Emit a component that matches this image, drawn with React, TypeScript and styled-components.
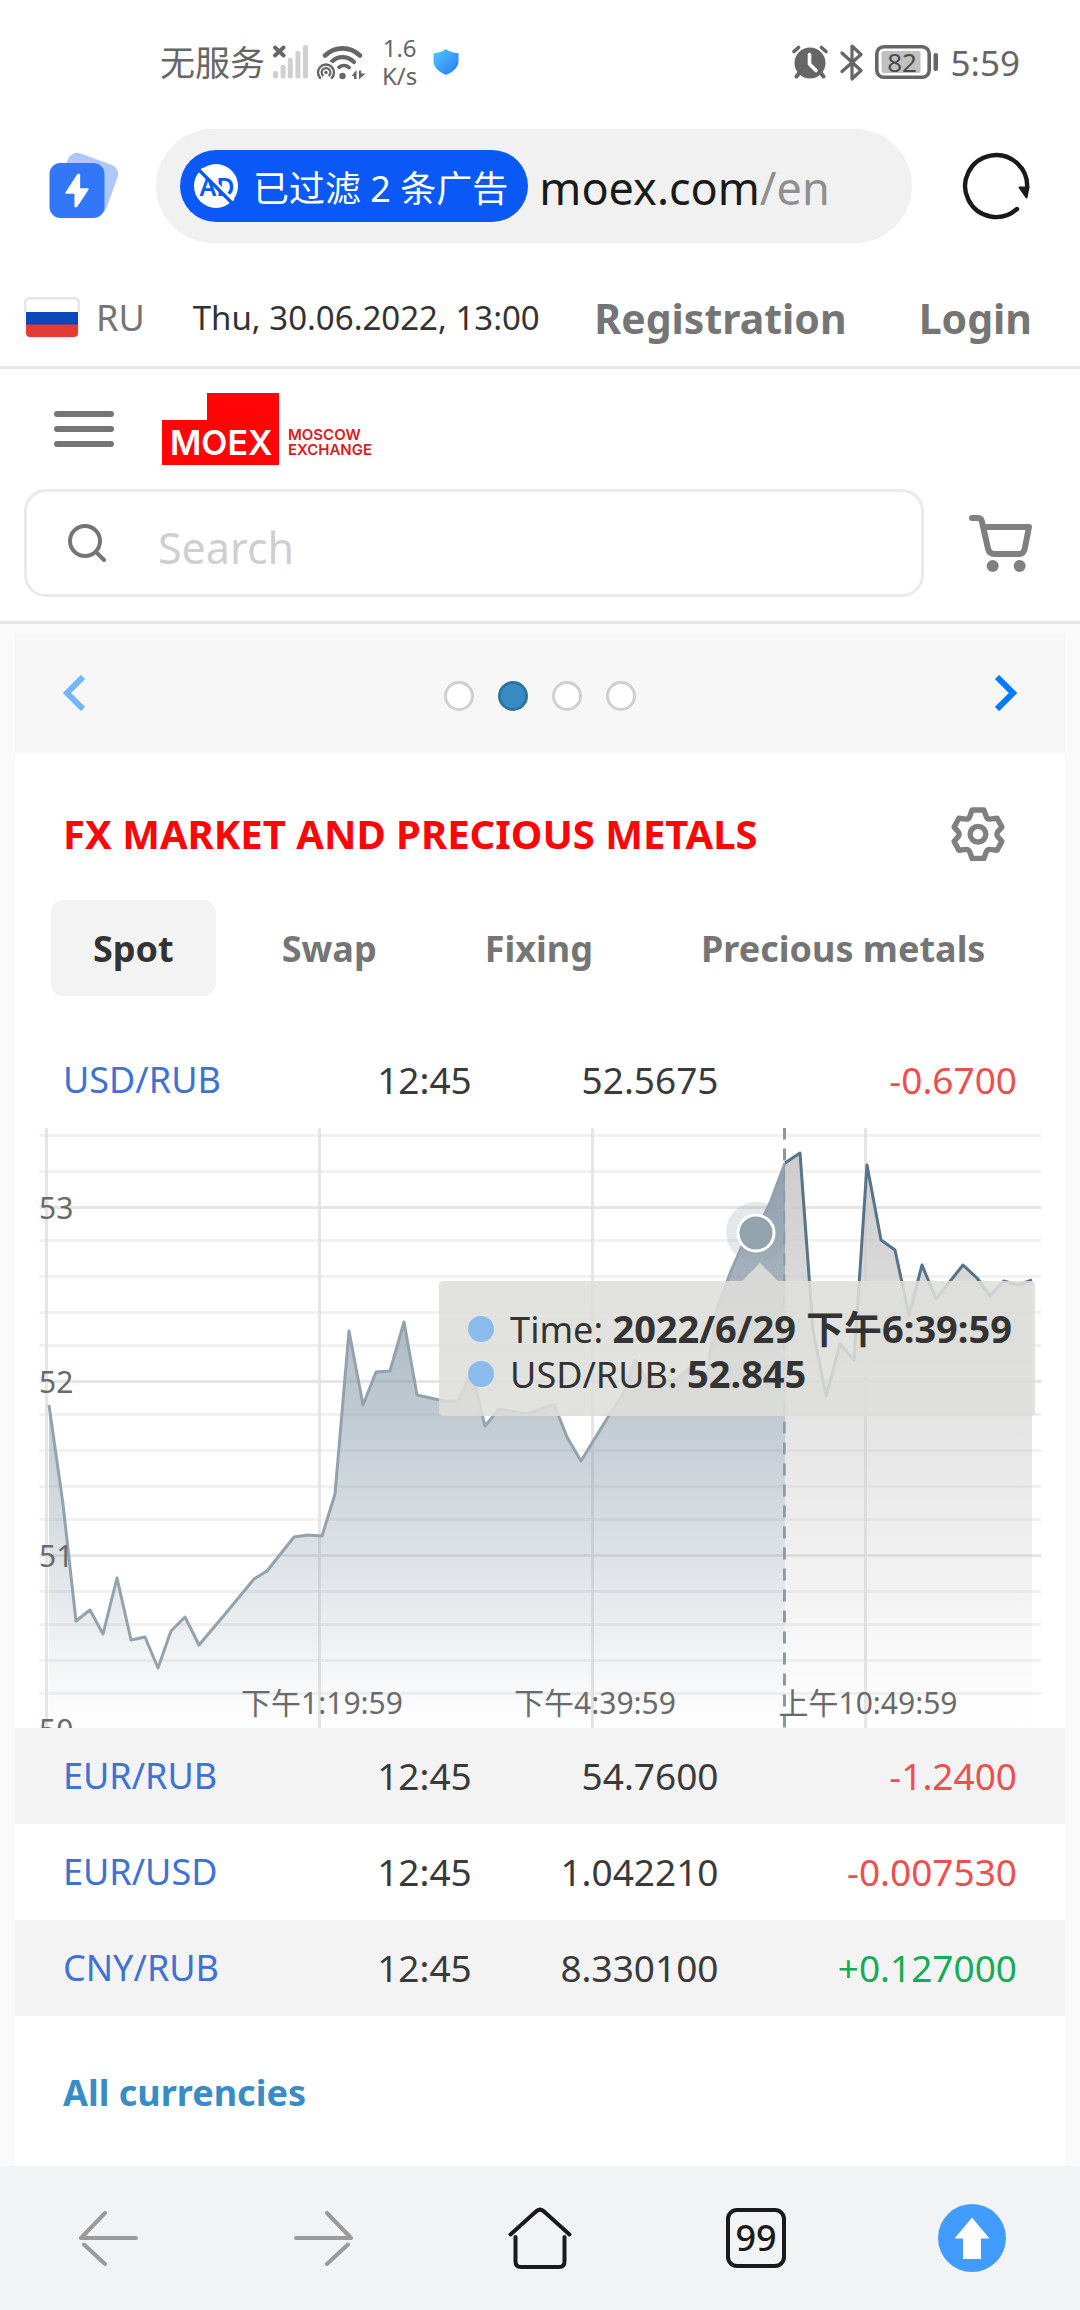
import React, { useState } from "react";
import styled, { createGlobalStyle } from "styled-components";

const sans = `"Noto Sans", "Noto Sans CJK SC", sans-serif`;

const GlobalStyle = createGlobalStyle`
  *, *::before, *::after { box-sizing: border-box; }
  body { margin: 0; background: #fff; color: #333; font-family: ${sans}; }
  button { margin: 0; padding: 0; border: 0; background: none; font: inherit; color: inherit; cursor: pointer; }
  a { color: inherit; text-decoration: none; }
  svg { display: block; flex: none; }
`;

/* ---------- phone status bar ---------- */

const StatusBar = styled.div`
  display: flex;
  justify-content: space-between;
  align-items: center;
  height: 124px;
  padding: 0 60px 0 160px;
  color: #666;
  font-size: 35px;
  line-height: 48px;
  white-space: nowrap;
`;

const StatusGroup = styled.div<{ $gap: number }>`
  display: flex;
  align-items: center;
  gap: ${(p) => p.$gap}px;
`;

const StatusText = styled.span`
  padding-top: 2px;
`;

const NetSpeed = styled.div`
  display: grid;
  justify-items: center;
  font-size: 24px;
  line-height: 28px;
`;

/* ---------- browser chrome ---------- */

const BrowserBar = styled.div`
  display: flex;
  align-items: center;
  gap: 36px;
  padding: 5px 50px 27px 48px;
`;

const AddressBar = styled.div`
  flex: 1;
  display: flex;
  align-items: center;
  gap: 11px;
  min-width: 0;
  height: 114px;
  padding: 0 24px;
  border-radius: 57px;
  background: #f1f1f1;
`;

const ReloadButton = styled.button`
  margin-left: 14px;
`;

const AdBadge = styled.button`
  display: flex;
  align-items: center;
  gap: 15px;
  height: 72px;
  padding: 0 20px 0 14px;
  border-radius: 36px;
  background: #0a59f7;
  color: #fff;
  font-size: 36px;
  white-space: nowrap;
`;

const Address = styled.div`
  color: #1a1a1a;
  font-size: 45px;
  line-height: 64px;
  padding-top: 4px;
  white-space: nowrap;
`;

const AddressPath = styled.span`
  color: #8f8f8f;
`;

const BottomNav = styled.nav`
  display: grid;
  grid-template-columns: repeat(5, 1fr);
  align-items: center;
  justify-items: center;
  height: 144px;
  background: #f1f3f5;
`;

const TabCount = styled.button`
  width: 60px;
  height: 60px;
  border: 4px solid #1a1a1a;
  border-radius: 11px;
  color: #1a1a1a;
  font-size: 36px;
  font-weight: 500;
  line-height: 50px;
`;

/* ---------- site header ---------- */

const TopBar = styled.div`
  display: flex;
  align-items: center;
  height: 99px;
  padding: 0 48px 0 24px;
  border-bottom: 3px solid #e8e8e8;
  white-space: nowrap;
`;

const Language = styled.button`
  display: flex;
  align-items: center;
  gap: 16px;
  color: #757575;
  font-size: 36px;
  line-height: 48px;
`;

const DateLabel = styled.time`
  margin-left: 48px;
  font-size: 33px;
  line-height: 48px;
`;

const Account = styled.nav`
  display: flex;
  gap: 72px;
  margin-left: auto;
  color: #757575;
  font-size: 41px;
  font-weight: 700;
  line-height: 56px;
`;

const Header = styled.header`
  padding: 24px;
  border-bottom: 3px solid #e5e5e5;
`;

const BrandRow = styled.div`
  display: flex;
  align-items: center;
  gap: 48px;
  padding-left: 30px;
`;

const SearchRow = styled.form`
  display: flex;
  align-items: center;
  gap: 45px;
  margin-top: 24px;
  padding-right: 24px;
`;

const SearchField = styled.label`
  flex: 1;
  display: flex;
  align-items: center;
  gap: 52px;
  height: 108px;
  padding: 0 41px;
  border: 3px solid #eaeaea;
  border-radius: 22px;
`;

const SearchInput = styled.input`
  flex: 1;
  min-width: 0;
  padding: 10px 0 0;
  border: 0;
  outline: 0;
  background: none;
  color: #333;
  font: 43px/60px ${sans};
  &::placeholder { color: #cfcfcf; opacity: 1; }
`;

/* ---------- market widget ---------- */

const Content = styled.main`
  padding: 9px 15px 0;
  background: #fafafa;
`;

const Slider = styled.div`
  display: flex;
  align-items: center;
  justify-content: space-between;
  height: 120px;
  padding: 0 48px;
  background: #f7f7f7;
`;

const Dots = styled.div`
  display: flex;
  gap: 24px;
  padding-top: 6px;
`;

const Dot = styled.button<{ $active: boolean }>`
  width: 30px;
  height: 30px;
  border: 3px solid ${(p) => (p.$active ? "#30739f" : "#d0d0d0")};
  border-radius: 50%;
  background: ${(p) => (p.$active ? "#388cc6" : "#fff")};
`;

const Panel = styled.section`
  background: #fff;
`;

const PanelHead = styled.div`
  display: flex;
  align-items: center;
  justify-content: space-between;
  padding: 54px 60px 39px 48px;
`;

const Title = styled.h2`
  margin: 0;
  color: #ff0508;
  font-size: 40px;
  font-weight: 700;
  line-height: 54px;
  white-space: nowrap;
`;

const Tabs = styled.div`
  display: flex;
  gap: 24px;
  padding: 0 36px 36px;
`;

const Tab = styled.button<{ $active: boolean }>`
  height: 96px;
  padding: 0 42px;
  border-radius: 12px;
  background: ${(p) => (p.$active ? "#f3f3f3" : "none")};
  color: ${(p) => (p.$active ? "#333" : "#757575")};
  font-size: 36px;
  font-weight: 700;
  white-space: nowrap;
`;

const Quotes = styled.table`
  width: 100%;
  border-collapse: collapse;
  table-layout: fixed;
  color: #3a3a3a;
  font-size: 37px;
  line-height: 48px;
`;

const Col = styled.col<{ $width: number }>`
  width: ${(p) => p.$width}%;
`;

const QuoteRow = styled.tr<{ $shaded: boolean }>`
  height: 96px;
  background: ${(p) => (p.$shaded ? "#f3f3f3" : "#fff")};
`;

const Pair = styled.th`
  padding: 0 0 0 48px;
  color: #3f72d2;
  font-size: 36px;
  font-weight: 400;
  text-align: left;
`;

const Value = styled.td`
  padding: 0;
  text-align: right;
`;

const Change = styled(Value)<{ $up: boolean }>`
  padding-right: 48px;
  color: ${(p) => (p.$up ? "#14ad57" : "#ef4e4e")};
`;

const ChartCell = styled.td`
  padding: 0;
`;

const ChartBox = styled.div`
  position: relative;
  color: #333;
`;

const ChartSvg = styled.svg`
  width: 100%;
  height: auto;
`;

const AxisText = styled.text`
  fill: #6a6a6a;
  font: 30px ${sans};
`;

const Tooltip = styled.div`
  position: absolute;
  top: 153px;
  right: 30px;
  display: grid;
  padding: 25px 23px 20px 29px;
  border-radius: 4px;
  background: rgba(222, 222, 218, 0.88);
  font-size: 36px;
  line-height: 45px;
  white-space: nowrap;
  &::before {
    content: "";
    position: absolute;
    right: 257px;
    bottom: 100%;
    border: 18px solid transparent;
    border-top: 0;
    border-bottom-color: rgba(222, 222, 218, 0.88);
  }
`;

const TooltipLine = styled.div`
  display: flex;
  align-items: center;
  gap: 16px;
  height: 45px;
  &::before {
    content: "";
    width: 26px;
    height: 26px;
    border-radius: 50%;
    background: #8abbed;
  }
`;

const TooltipValue = styled.b`
  font-size: 38px;
`;

const PanelFoot = styled.div`
  padding: 53px 48px 49px;
  color: #3a8cc4;
  font-size: 36px;
  font-weight: 700;
  line-height: 48px;
`;

/* ---------- icons ---------- */

const SignalIcon = () => (
  <svg width="36" height="34" viewBox="0 0 36 34">
    <g fill="#d0d0d0">
      <rect x="0" y="26" width="5" height="7.5" rx="2" />
      <rect x="7.6" y="19.7" width="5" height="13.8" rx="2" />
      <rect x="14.8" y="12.7" width="5" height="20.8" rx="2" />
      <rect x="22.4" y="6" width="5" height="27.5" rx="2" />
      <rect x="30" y="0" width="5" height="33.5" rx="2" />
    </g>
    <path d="M2 2.5l8.6 8M10.6 2.5l-8.6 8" stroke="#666" strokeWidth="3.8" strokeLinecap="round" />
  </svg>
);

const WifiIcon = () => (
  <svg width="49" height="35" viewBox="0 0 49 35" fill="none" stroke="#666">
    <path d="M8 10.5C18 1 33 1 43 10.5" strokeWidth="4.6" strokeLinecap="round" />
    <path d="M14.5 17C21 10.5 30 10.5 37 17" strokeWidth="4.2" strokeLinecap="round" />
    <path d="M22 22.2C25 20 29 20 32 22.5" strokeWidth="3.8" strokeLinecap="round" />
    <circle cx="9" cy="27" r="11" fill="#fff" stroke="none" />
    <path d="M3.8 33.6A8 8 0 1 1 14.2 33.6" strokeWidth="2.4" />
    <path d="M6.4 31A4.4 4.4 0 1 1 11.6 31" strokeWidth="2.2" />
    <circle cx="9" cy="27.5" r="1.7" fill="#666" stroke="none" />
    <circle cx="25.5" cy="31" r="3.2" fill="#666" stroke="none" />
    <path d="M34.5 31l5-6v9h-2.500v-3zM42 25.500h2.200v3H48.500l-6.500 6z" fill="#666" stroke="none" />
  </svg>
);

const ShieldIcon = () => (
  <svg width="26" height="26" viewBox="0 0 26 26">
    <defs>
      <linearGradient id="shield" x1="0" y1="0" x2="1" y2="1">
        <stop offset="0" stopColor="#55c8fd" />
        <stop offset="1" stopColor="#2378fb" />
      </linearGradient>
    </defs>
    <path d="M13 0C16.5 2.500 20.5 3.800 25.5 4.200V12C25.5 18.500 20 23 13 26C6 23 .5 18.500 .5 12V4.200C5.500 3.800 9.500 2.500 13 0Z" fill="url(#shield)" />
  </svg>
);

const AlarmIcon = () => (
  <svg width="36" height="34" viewBox="0 0 36 34">
    <g stroke="#666" strokeLinecap="round" fill="none">
      <path d="M2 6.5L6.5 2.5M29.5 2.5L34 6.5" strokeWidth="3.6" />
      <path d="M8 27l-3.5 4.500M28 27l3.500 4.500" strokeWidth="4" />
    </g>
    <circle cx="18" cy="18" r="15.5" fill="#666" />
    <path d="M17.5 9.5v9.500l6.500 6.500" stroke="#fff" strokeWidth="3.6" strokeLinecap="round" fill="none" />
  </svg>
);

const BluetoothIcon = () => (
  <svg width="23" height="37" viewBox="0 0 23 37" fill="none" stroke="#666" strokeWidth="3.2" strokeLinecap="round" strokeLinejoin="round">
    <path d="M2 9L21 26.5L12 35V2L21 10.5L2 27.5" />
  </svg>
);

const BatteryIcon = () => (
  <svg width="64" height="34" viewBox="0 0 64 34">
    <rect x="1.8" y="1.8" width="52.4" height="30.4" rx="7" fill="none" stroke="#666" strokeWidth="3.6" />
    <rect x="6.5" y="6" width="39" height="22" rx="2" fill="#c0c0c0" />
    <rect x="58.5" y="8" width="4.5" height="18" rx="2" fill="#666" />
    <text x="27" y="26.5" textAnchor="middle" fontFamily="Noto Sans, sans-serif" fontSize="26" fill="#4a4a4a">82</text>
  </svg>
);

const BoostIcon = () => (
  <svg width="72" height="70" viewBox="0 0 72 70">
    <rect x="12.5" y="6.5" width="53" height="53" rx="10" fill="#aec8fd" transform="rotate(20 39 33)" />
    <rect x="1.5" y="12" width="55" height="55" rx="11" fill="#3177f8" />
    <path d="M30 23.5L18 42H27.2V55.5L28.5 55.5L40 38H31.4V23.5Z" fill="#fff" stroke="#fff" strokeWidth="1.5" strokeLinejoin="round" />
  </svg>
);

const NoAdIcon = () => (
  <svg width="44" height="44" viewBox="0 0 44 44">
    <circle cx="22" cy="22" r="22" fill="#fff" />
    <text x="23" y="32" textAnchor="middle" fontFamily="Noto Sans, sans-serif" fontSize="25" fontWeight="600" fill="#0a59f7">AD</text>
    <path d="M7.5 4.5L39.5 36.5" stroke="#fff" strokeWidth="3" />
    <path d="M5 6L38 39" stroke="#0a59f7" strokeWidth="3.2" />
  </svg>
);

const ReloadIcon = () => (
  <svg width="68" height="68" viewBox="0 0 68 68">
    <path d="M65 37A31 31 0 1 0 55 57" fill="none" stroke="#1a1a1a" strokeWidth="4.4" strokeLinecap="round" />
    <path d="M57.5 35.5H66.5L64.5 45.5Z" fill="#1a1a1a" stroke="#1a1a1a" strokeWidth="2" strokeLinejoin="round" />
  </svg>
);

const FlagIcon = () => (
  <svg width="56" height="42" viewBox="0 0 56 42">
    <path d="M2 27H54V36Q54 40 50 40H6Q2 40 2 36Z" fill="#e53b35" />
    <path d="M2 15H54V27.5H2Z" fill="#0c47b7" />
    <path d="M1.2 15V6Q1.2 1.2 6 1.2H50Q54.8 1.2 54.8 6V15" fill="#fff" stroke="#e6e6e6" strokeWidth="2.4" />
    <rect x="1" y="1" width="54" height="40" rx="5" fill="none" stroke="#e6e6e6" strokeOpacity=".6" strokeWidth="1.5" />
  </svg>
);

const MenuIcon = () => (
  <svg width="60" height="36" viewBox="0 0 60 36" stroke="#757575" strokeWidth="6" strokeLinecap="round">
    <path d="M3 3H57M3 18H57M3 33H57" />
  </svg>
);

const Logo = () => (
  <svg width="212" height="72" viewBox="0 0 212 72" fontFamily="Inter, Liberation Sans, sans-serif">
    <path d="M45 0H117V72H0V27H45Z" fill="#ff0508" />
    <text x="8" y="62" fontSize="34" fontWeight="600" fill="#fff">MOEX</text>
    <g fill="#dd1a1e" fontSize="15" fontWeight="600">
      <text x="126" y="47">MOSCOW</text>
      <text x="126" y="62">EXCHANGE</text>
    </g>
  </svg>
);

const SearchIcon = () => (
  <svg width="38" height="38" viewBox="0 0 38 38" fill="none" stroke="#757575" strokeWidth="4" strokeLinecap="round">
    <circle cx="17" cy="17" r="15" />
    <path d="M28 28L36 36" />
  </svg>
);

const CartIcon = () => (
  <svg width="63" height="60" viewBox="0 -2 63 60" fill="none" stroke="#808080" strokeWidth="6" strokeLinecap="round" strokeLinejoin="round">
    <path d="M3 3H8.5Q12 3 12.8 6L19 33.5Q20.2 39 25.5 39H50Q54.8 39 55.8 33.5L60 12H15" />
    <g fill="#808080" stroke="none">
      <circle cx="23.7" cy="51" r="6" />
      <circle cx="50.7" cy="51" r="6" />
    </g>
  </svg>
);

const Chevron = ({ color, next = false }: { color: string; next?: boolean }) => (
  <svg width="22" height="36" viewBox="0 0 22 36" fill="none" stroke={color} strokeWidth="6">
    <path d={next ? "M2 2L18 18L2 34" : "M20 2L4 18L20 34"} />
  </svg>
);

const GearIcon = () => (
  <svg width="54" height="54" viewBox="0 0 54 55" fill="none" stroke="#808080" strokeWidth="5.5" strokeLinejoin="round">
    <path d="M21 3H33L35.5 10Q36.5 12.3 39 12.3L46.5 11.5L51.3 20.5L47 25.5Q45.6 27.7 47 30L51.3 35L46.5 44L39 43.2Q36.5 43.2 35.5 45.5L33 52.5H21L18.5 45.5Q17.5 43.2 15 43.2L7.5 44L2.7 35L7 30Q8.4 27.7 7 25.5L2.7 20.5L7.5 11.5L15 12.3Q17.5 12.3 18.5 10Z" />
    <circle cx="27" cy="27.7" r="8" />
  </svg>
);

const ArrowIcon = ({ forward = false }: { forward?: boolean }) => (
  <svg width="60" height="55" viewBox="0 0 60 55" fill="none" stroke="#9b9b9b" strokeWidth="4" strokeLinecap="round" strokeLinejoin="round">
    {forward ? <path d="M33 2L57 27H2M54 33.5L33 53" /> : <path d="M27 2L3 27H58M6 33.5L27 53" />}
  </svg>
);

const HomeIcon = () => (
  <svg width="64" height="63" viewBox="0 0 64 63" fill="none" stroke="#1a1a1a" strokeWidth="4" strokeLinecap="round">
    <path d="M2.500 27.5L28.5 4Q32 1.2 35.5 4L61.5 27.5" />
    <path d="M7.5 30V54.5Q7.5 60 13 60H51Q56.5 60 56.5 54.5V30" />
  </svg>
);

const TopIcon = () => (
  <svg width="68" height="68" viewBox="0 0 68 68">
    <circle cx="34" cy="34" r="34" fill="#429bff" />
    <path d="M34 13.5L51.5 34.5H43V55H25V34.5H16.5Z" fill="#fff" />
  </svg>
);

/* ---------- chart ---------- */

type Point = [number, number];

const before: Point[] = [
  [34, 277], [48, 376], [61, 493], [75, 482], [88, 506], [102, 450], [116, 512], [130, 509],
  [143, 540], [156, 503], [170, 489], [184, 517], [211, 485], [239, 451], [252, 443], [279, 409],
  [293, 407], [307, 408], [320, 366], [334, 203], [348, 277], [361, 244], [375, 243], [389, 194],
  [402, 267], [429, 273], [443, 273], [457, 245], [470, 298], [484, 281], [512, 286], [539, 276],
  [552, 309], [566, 333], [593, 289], [607, 268], [620, 232], [634, 255], [661, 252], [675, 239],
  [691, 251], [702, 180], [716, 143], [727, 118], [741, 104], [755, 75], [770, 35],
];

const after: Point[] = [
  [770, 35], [785, 25], [798, 202], [811, 268], [825, 216], [839, 232], [852, 37], [866, 112],
  [880, 122], [894, 187], [907, 137], [921, 171], [948, 137], [962, 150], [975, 168], [989, 153],
  [1003, 157], [1017, 152],
];

const majorY = [79, 253, 427];
const minorY = [7, 43, 112, 148, 184, 217, 286, 322, 358, 391, 463, 496, 532, 565];
const gridX = [31, 304, 577, 850];

const toLine = (points: Point[]) => points.map(([x, y]) => `${x},${y}`).join(" ");
const toArea = (points: Point[]) =>
  `${points[0][0]},600 ${toLine(points)} ${points[points.length - 1][0]},600`;

const Chart = () => (
  <ChartBox>
    <ChartSvg viewBox="0 0 1050 600" role="img" aria-label="USD/RUB">
      <defs>
        <linearGradient id="beforeFill" gradientUnits="userSpaceOnUse" x1="0" y1="30" x2="0" y2="600">
          <stop offset="0" stopColor="#8b9ca9" stopOpacity=".98" />
          <stop offset="1" stopColor="#8f9fae" stopOpacity="0" />
        </linearGradient>
        <linearGradient id="afterFill" gradientUnits="userSpaceOnUse" x1="0" y1="30" x2="0" y2="600">
          <stop offset="0" stopColor="#cbcbcb" stopOpacity=".95" />
          <stop offset="1" stopColor="#cbcbcb" stopOpacity="0" />
        </linearGradient>
      </defs>
      <g strokeWidth="3" transform="translate(0.5 0.5)">
        {minorY.map((y) => <line key={y} x1="24" x2="1026" y1={y} y2={y} stroke="#f1f1f1" />)}
        {majorY.map((y) => <line key={y} x1="24" x2="1026" y1={y} y2={y} stroke="#e5e5e5" />)}
        {gridX.map((x) => <line key={x} x1={x} x2={x} y1="-1" y2="600" stroke="#e5e5e5" />)}
        <line x1="769" x2="769" y1="-1" y2="600" stroke="#8a98a4" strokeDasharray="12 9" />
      </g>
      <polygon points={toArea(before)} fill="url(#beforeFill)" />
      <polygon points={toArea(after)} fill="url(#afterFill)" />
      <polyline points={toLine(before)} fill="none" stroke="#93a3ae" strokeWidth="3" strokeLinejoin="round" />
      <polyline points={toLine(after)} fill="none" stroke="#55738a" strokeWidth="3" strokeLinejoin="round" />
      <circle cx="741" cy="104" r="30" fill="#93a3ae" fillOpacity=".25" />
      <circle cx="741" cy="105" r="18" fill="#93a3ae" stroke="#fff" strokeWidth="3" />
      <AxisText x="24" y="91">53</AxisText>
      <AxisText x="24" y="265">52</AxisText>
      <AxisText x="24" y="439">51</AxisText>
      <AxisText x="24" y="613">50</AxisText>
      <AxisText x="307" y="586" textAnchor="middle">下午1:19:59</AxisText>
      <AxisText x="580" y="586" textAnchor="middle">下午4:39:59</AxisText>
      <AxisText x="853" y="586" textAnchor="middle">上午10:49:59</AxisText>
    </ChartSvg>
    <Tooltip role="tooltip">
      <TooltipLine><span>Time: <TooltipValue>2022/6/29 下午6:39:59</TooltipValue></span></TooltipLine>
      <TooltipLine><span>USD/RUB: <TooltipValue>52.845</TooltipValue></span></TooltipLine>
    </Tooltip>
  </ChartBox>
);

/* ---------- page ---------- */

const quotes = [
  { pair: "USD/RUB", time: "12:45", price: "52.5675", change: "-0.6700" },
  { pair: "EUR/RUB", time: "12:45", price: "54.7600", change: "-1.2400" },
  { pair: "EUR/USD", time: "12:45", price: "1.042210", change: "-0.007530" },
  { pair: "CNY/RUB", time: "12:45", price: "8.330100", change: "+0.127000" },
];

const tabNames = ["Spot", "Swap", "Fixing", "Precious metals"];

export default function App() {
  const [tab, setTab] = useState("Spot");
  const [slide, setSlide] = useState(1);

  return (
    <>
      <GlobalStyle />
      <StatusBar>
        <StatusGroup $gap={16}>
          <StatusGroup $gap={8}>
            <StatusText>无服务</StatusText>
            <SignalIcon />
            <WifiIcon />
          </StatusGroup>
          <NetSpeed>
            <span>1.6</span>
            <span>K/s</span>
          </NetSpeed>
          <ShieldIcon />
        </StatusGroup>
        <StatusGroup $gap={12}>
          <AlarmIcon />
          <BluetoothIcon />
          <BatteryIcon />
          <StatusText>5:59</StatusText>
        </StatusGroup>
      </StatusBar>

      <BrowserBar>
        <button aria-label="Boost"><BoostIcon /></button>
        <AddressBar>
          <AdBadge>
            <NoAdIcon />
            已过滤 2 条广告
          </AdBadge>
          <Address>moex.com<AddressPath>/en</AddressPath></Address>
        </AddressBar>
        <ReloadButton aria-label="Reload"><ReloadIcon /></ReloadButton>
      </BrowserBar>

      <TopBar>
        <Language><FlagIcon />RU</Language>
        <DateLabel>Thu, 30.06.2022, 13:00</DateLabel>
        <Account>
          <a href="#registration">Registration</a>
          <a href="#login">Login</a>
        </Account>
      </TopBar>

      <Header>
        <BrandRow>
          <button aria-label="Menu"><MenuIcon /></button>
          <a href="#home" aria-label="Moscow Exchange"><Logo /></a>
        </BrandRow>
        <SearchRow onSubmit={(e) => e.preventDefault()}>
          <SearchField>
            <SearchIcon />
            <SearchInput type="text" placeholder="Search" aria-label="Search" />
          </SearchField>
          <a href="#cart" aria-label="Cart"><CartIcon /></a>
        </SearchRow>
      </Header>

      <Content>
        <Slider>
          <button aria-label="Previous" onClick={() => setSlide(Math.max(0, slide - 1))}>
            <Chevron color="#75b5fa" />
          </button>
          <Dots>
            {[0, 1, 2, 3].map((i) => (
              <Dot key={i} $active={i === slide} aria-label={`Slide ${i + 1}`} onClick={() => setSlide(i)} />
            ))}
          </Dots>
          <button aria-label="Next" onClick={() => setSlide(Math.min(3, slide + 1))}>
            <Chevron color="#007bff" next />
          </button>
        </Slider>

        <Panel>
          <PanelHead>
            <Title>FX MARKET AND PRECIOUS METALS</Title>
            <button aria-label="Settings"><GearIcon /></button>
          </PanelHead>
          <Tabs role="tablist">
            {tabNames.map((name) => (
              <Tab key={name} role="tab" aria-selected={name === tab} $active={name === tab} onClick={() => setTab(name)}>
                {name}
              </Tab>
            ))}
          </Tabs>
          <Quotes>
            <colgroup>
              <Col $width={24} />
              <Col $width={19.5} />
              <Col $width={23.5} />
              <Col $width={33} />
            </colgroup>
            <tbody>
              {quotes.map((q, i) => (
                <React.Fragment key={q.pair}>
                  <QuoteRow $shaded={i % 2 === 1}>
                    <Pair scope="row"><a href={`#${q.pair}`}>{q.pair}</a></Pair>
                    <Value>{q.time}</Value>
                    <Value>{q.price}</Value>
                    <Change $up={q.change.startsWith("+")}>{q.change}</Change>
                  </QuoteRow>
                  {i === 0 && (
                    <tr>
                      <ChartCell colSpan={4}><Chart /></ChartCell>
                    </tr>
                  )}
                </React.Fragment>
              ))}
            </tbody>
          </Quotes>
          <PanelFoot>
            <a href="#currencies">All currencies</a>
          </PanelFoot>
        </Panel>
      </Content>

      <BottomNav>
        <button aria-label="Back"><ArrowIcon /></button>
        <button aria-label="Forward"><ArrowIcon forward /></button>
        <button aria-label="Home"><HomeIcon /></button>
        <TabCount aria-label="Tabs">99</TabCount>
        <button aria-label="To top"><TopIcon /></button>
      </BottomNav>
    </>
  );
}
